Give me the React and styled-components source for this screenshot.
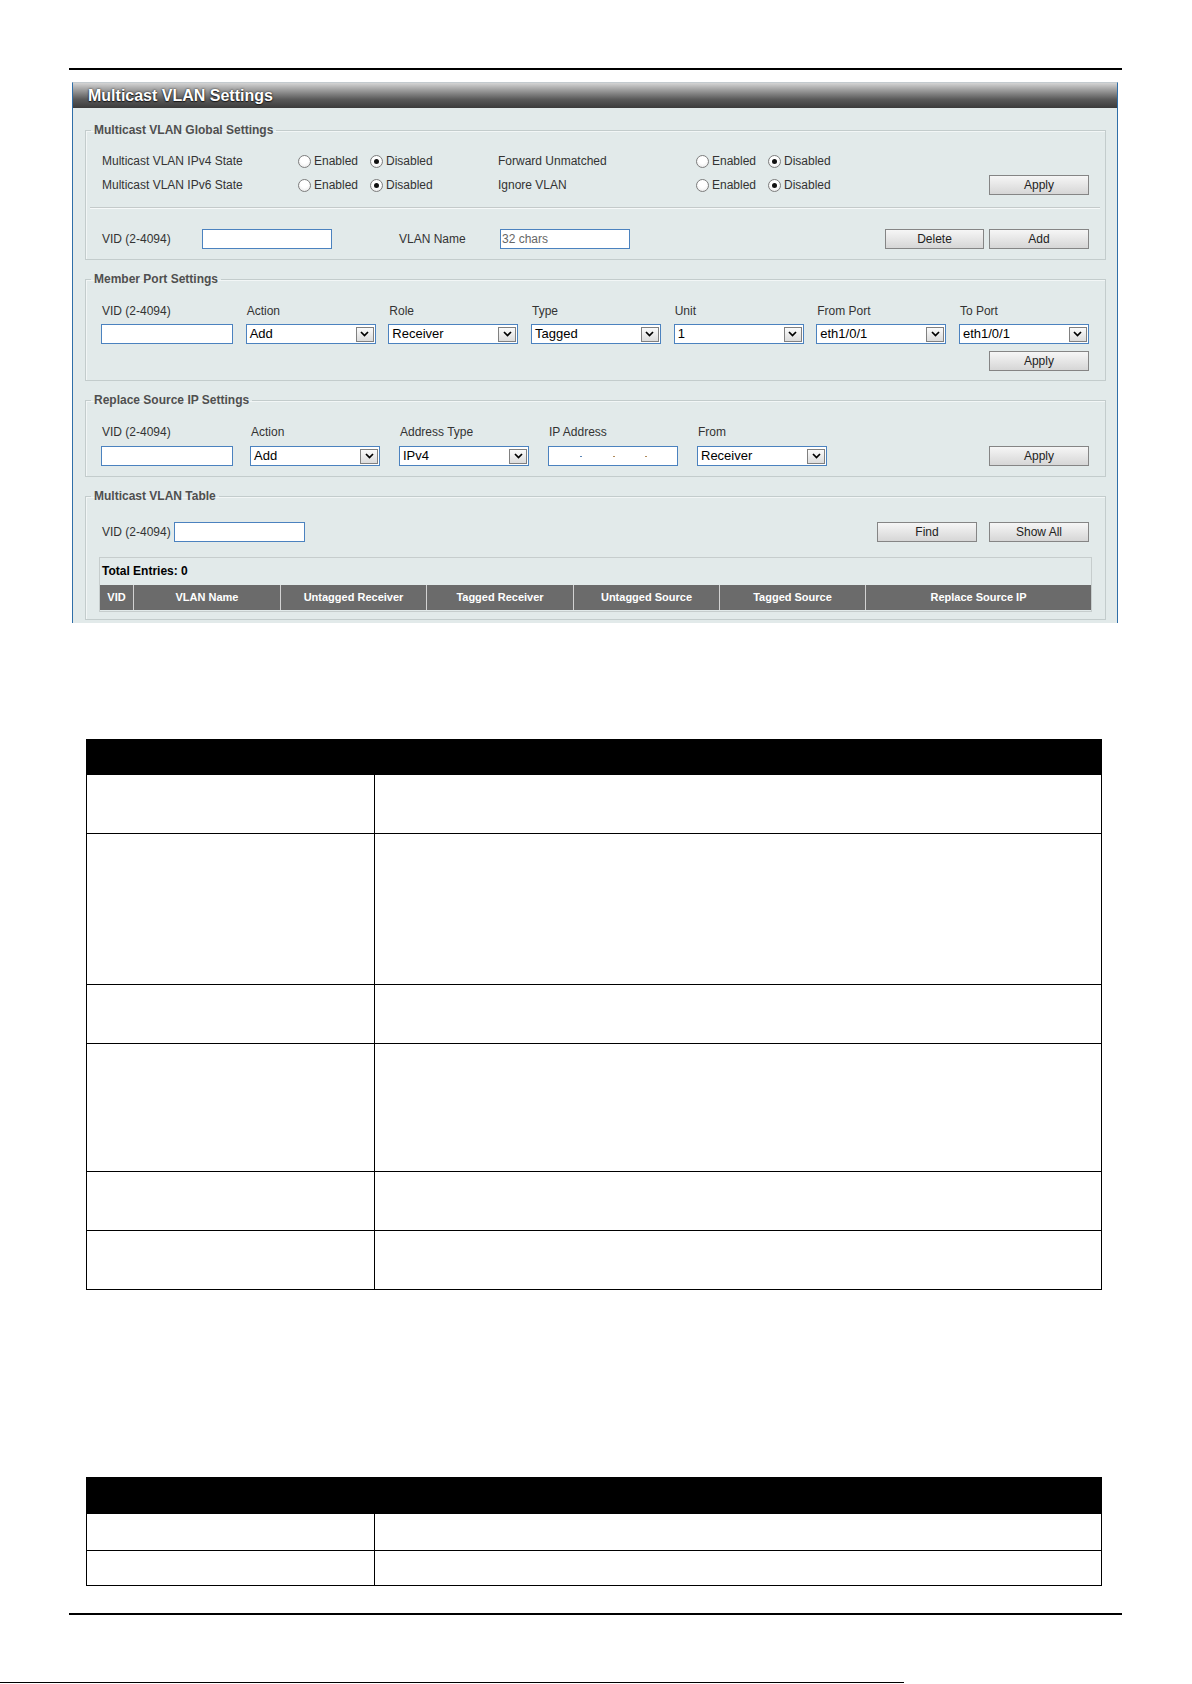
import React from "react";
import styled, { createGlobalStyle } from "styled-components";

const GlobalStyle = createGlobalStyle`
  html, body { margin: 0; padding: 0; background: #fff; }
  body { font-family: "Liberation Sans", Arial, sans-serif; color: #333; }
  * { box-sizing: border-box; }
`;

const FONT = `"Liberation Sans", Arial, sans-serif`;

const Page = styled.div`
  width: 1192px;
  height: 1684px;
  display: flex;
  flex-direction: column;
  overflow: hidden;
`;

const Rule = styled.div`
  flex-shrink: 0;
  height: ${(p) => p.$thick}px;
  width: ${(p) => p.$width}px;
  margin-left: ${(p) => p.$left}px;
  margin-top: ${(p) => p.$top}px;
  background: #000;
`;

/* ---------- web panel ---------- */

const Panel = styled.section`
  flex-shrink: 0;
  margin: 12px 0 0 72px;
  width: 1046px;
  border: 1px solid #2f6ea8;
  border-top-color: #c3cace;
  border-bottom: none;
  background: #e2eaea;
`;

const TitleBar = styled.div`
  height: 25px;
  padding-left: 15px;
  background: linear-gradient(#d4d4d4 0%, #9a9a9a 30%, #5a5a5a 65%, #3b3b3b 100%);
  color: #fff;
  font: bold 16px/25px ${FONT};
  text-shadow: 0 0 2px #1a1a1a, 0 1px 1px #1a1a1a;
`;

const PanelBody = styled.div`
  padding: 15px 11px 3px 12px;
  display: flex;
  flex-direction: column;
  gap: 12px;
`;

const Group = styled.fieldset`
  margin: 0;
  padding: 0;
  min-width: 0;
  border: 1px solid #c3cccc;
  box-shadow: inset 1px 1px 0 #f2f6f6;
`;

const Legend = styled.legend`
  margin-left: 5px;
  padding: 0 3px;
  font: bold 12px/14px ${FONT};
  color: #4f4f4f;
`;

const GroupBody = styled.div`
  padding: ${(p) => p.$pad};
`;

const Label = styled.span`
  font: 12px/14px ${FONT};
  color: #333;
  white-space: nowrap;
  padding-left: ${(p) => p.$indent || 0}px;
  width: ${(p) => (p.$w ? `${p.$w}px` : "auto")};
  flex-shrink: 0;
`;

const StateRows = styled.div`
  display: flex;
  flex-direction: column;
  gap: 2px;
  padding: 0 11px 0 12px;
`;

const StateRow = styled.div`
  display: grid;
  grid-template-columns: 196px 200px 198px 1fr auto;
  align-items: center;
  height: 22px;
`;

const RadioGroup = styled.div`
  display: flex;
  align-items: center;
`;

const Option = styled.label`
  display: inline-flex;
  align-items: center;
  gap: 3px;
  width: 72px;
  font: 12px/14px ${FONT};
  color: #333;
`;

const RadioDot = styled.span`
  width: 13px;
  height: 13px;
  border-radius: 50%;
  border: 1px solid #7d7d7d;
  background: radial-gradient(circle at 50% 35%, #ffffff 40%, #e4e4e4 100%);
  display: inline-flex;
  align-items: center;
  justify-content: center;
  &::after {
    content: "";
    width: 5px;
    height: 5px;
    border-radius: 50%;
    background: #111;
    display: ${(p) => (p.$on ? "block" : "none")};
  }
`;

const Divider = styled.div`
  margin-top: 11px;
  height: 2px;
  border-top: 1px solid #c4caca;
  border-bottom: 1px solid #f6f9f9;
`;

const FlexRow = styled.div`
  display: flex;
  align-items: center;
  height: 20px;
  margin-top: ${(p) => p.$top || 0}px;
  padding: 0 11px 0 12px;
`;

const Spacer = styled.div`
  flex: 1;
`;

const TextInput = styled.div`
  width: ${(p) => p.$w || 130}px;
  height: 20px;
  flex-shrink: 0;
  border: 1px solid #4b82bf;
  background: #fff;
  font: 12px/18px ${FONT};
  color: #666;
  padding-left: 1px;
  margin-left: ${(p) => p.$ml || 0}px;
`;

const IpInput = styled(TextInput)`
  display: flex;
  align-items: center;
  justify-content: space-evenly;
`;

const IpDot = styled.span`
  width: 2px;
  height: 1px;
  margin-top: 1px;
  background: ${(p) => p.$c};
`;

const SelectBox = styled.div`
  width: ${(p) => p.$w || 130}px;
  height: 20px;
  border: 1px solid #4b82bf;
  background: #fff;
  display: flex;
  align-items: center;
  justify-content: space-between;
  padding: 0 1px 0 3px;
  font: 13px/18px ${FONT};
  color: #000;
`;

const ArrowBox = styled.span`
  width: 18px;
  height: 15px;
  border: 1px solid #808080;
  background: linear-gradient(#fbfbfb, #dcdcdc);
  display: flex;
  align-items: center;
  justify-content: center;
`;

const Button = styled.button`
  width: ${(p) => p.$w || 100}px;
  height: 20px;
  margin: 0 0 0 ${(p) => p.$ml || 0}px;
  padding: 0;
  border: 1px solid #858585;
  border-radius: 0;
  background: linear-gradient(#f6f6f6, #d6d6d6);
  font: 12px/18px ${FONT};
  color: #222;
  justify-self: end;
`;

const MemberGrid = styled.div`
  display: grid;
  grid-template-columns: 132px repeat(6, 130px);
  column-gap: 12.67px;
  row-gap: 6px;
  padding: 0 11px 0 11px;
  align-items: end;
`;

const ReplaceGrid = styled.div`
  display: grid;
  grid-template-columns: 149px 149px 149px 149px 130px 1fr;
  row-gap: 7px;
  padding: 0 11px 0 11px;
  align-items: end;
`;

const GridLabel = styled(Label)`
  padding-left: 1px;
`;

const ApplyCell = styled.div`
  grid-column: ${(p) => p.$col};
  display: flex;
  justify-content: flex-end;
  margin-top: ${(p) => p.$mt || 0}px;
`;

const EntriesBox = styled.div`
  margin: 15px 8px 0 9px;
  border: 1px solid #c6cdcd;
  padding-bottom: 1px;
`;

const EntriesTitle = styled.div`
  height: 27px;
  padding-left: 2px;
  font: bold 12px/27px ${FONT};
  color: #000;
`;

const HeadRow = styled.div`
  display: grid;
  grid-template-columns: 33px 147px 146px 147px 146px 146px 1fr;
  height: 25px;
  background: #6b6b6b;
`;

const HeadCell = styled.div`
  font: bold 11px/25px ${FONT};
  color: #fff;
  text-align: center;
  border-left: ${(p) => (p.$first ? "none" : "1px solid #d2d2d2")};
  white-space: nowrap;
`;

/* ---------- document tables ---------- */

const DocTable = styled.div`
  flex-shrink: 0;
  margin: ${(p) => p.$top}px 0 0 86px;
  width: 1016px;
  border: 1px solid #000;
`;

const DocHead = styled.div`
  height: ${(p) => p.$h}px;
  background: #000;
`;

const DocRow = styled.div`
  display: grid;
  grid-template-columns: 287px 1fr;
  height: ${(p) => p.$h}px;
  border-top: 1px solid #000;
`;

const DocCell = styled.div`
  border-left: ${(p) => (p.$first ? "none" : "1px solid #000")};
`;

/* ---------- small pieces ---------- */

const Chevron = () => (
  <svg width="9" height="6" viewBox="0 0 9 6">
    <polyline points="1,1 4.5,4.6 8,1" fill="none" stroke="#000" strokeWidth="1.7" />
  </svg>
);

const Select = ({ value, w }) => (
  <SelectBox $w={w}>
    <span>{value}</span>
    <ArrowBox>
      <Chevron />
    </ArrowBox>
  </SelectBox>
);

const Radios = ({ on }) => (
  <RadioGroup>
    <Option>
      <RadioDot $on={on === "en"} />
      Enabled
    </Option>
    <Option>
      <RadioDot $on={on === "dis"} />
      Disabled
    </Option>
  </RadioGroup>
);

const memberFields = [
  ["VID (2-4094)", null],
  ["Action", "Add"],
  ["Role", "Receiver"],
  ["Type", "Tagged"],
  ["Unit", "1"],
  ["From Port", "eth1/0/1"],
  ["To Port", "eth1/0/1"],
];

const tableCols = [
  "VID",
  "VLAN Name",
  "Untagged Receiver",
  "Tagged Receiver",
  "Untagged Source",
  "Tagged Source",
  "Replace Source IP",
];

const App = () => (
  <Page>
    <GlobalStyle />
    <Rule $top={68} $left={69} $width={1053} $thick={2} />

    <Panel>
      <TitleBar>Multicast VLAN Settings</TitleBar>
      <PanelBody>
        <Group>
          <Legend>Multicast VLAN Global Settings</Legend>
          <GroupBody $pad="13px 5px 10px 4px">
            <StateRows>
              <StateRow>
                <Label>Multicast VLAN IPv4 State</Label>
                <Radios on="dis" />
                <Label>Forward Unmatched</Label>
                <Radios on="dis" />
                <span />
              </StateRow>
              <StateRow>
                <Label>Multicast VLAN IPv6 State</Label>
                <Radios on="dis" />
                <Label>Ignore VLAN</Label>
                <Radios on="dis" />
                <Button>Apply</Button>
              </StateRow>
            </StateRows>
            <Divider />
            <FlexRow $top={20}>
              <Label $w={100}>VID (2-4094)</Label>
              <TextInput />
              <Label $w={168} $indent={67}>VLAN Name</Label>
              <TextInput>32 chars</TextInput>
              <Spacer />
              <Button $w={99}>Delete</Button>
              <Button $ml={5}>Add</Button>
            </FlexRow>
          </GroupBody>
        </Group>

        <Group>
          <Legend>Member Port Settings</Legend>
          <GroupBody $pad="18px 5px 9px 4px">
            <MemberGrid>
              {memberFields.map(([label]) => (
                <GridLabel key={label}>{label}</GridLabel>
              ))}
              {memberFields.map(([label, value]) =>
                value === null ? (
                  <TextInput key={label} $w={132} />
                ) : (
                  <Select key={label} value={value} />
                )
              )}
              <ApplyCell $col={7} $mt={1}>
                <Button>Apply</Button>
              </ApplyCell>
            </MemberGrid>
          </GroupBody>
        </Group>

        <Group>
          <Legend>Replace Source IP Settings</Legend>
          <GroupBody $pad="18px 5px 10px 4px">
            <ReplaceGrid>
              <GridLabel>VID (2-4094)</GridLabel>
              <GridLabel>Action</GridLabel>
              <GridLabel>Address Type</GridLabel>
              <GridLabel>IP Address</GridLabel>
              <GridLabel>From</GridLabel>
              <span />
              <TextInput $w={132} />
              <Select value="Add" />
              <Select value="IPv4" />
              <IpInput>
                <IpDot $c="#5a86b8" />
                <IpDot $c="#b08a5a" />
                <IpDot $c="#b08a5a" />
              </IpInput>
              <Select value="Receiver" />
              <ApplyCell $col={6}>
                <Button>Apply</Button>
              </ApplyCell>
            </ReplaceGrid>
          </GroupBody>
        </Group>

        <Group>
          <Legend>Multicast VLAN Table</Legend>
          <GroupBody $pad="19px 5px 7px 4px">
            <FlexRow>
              <Label>VID (2-4094)</Label>
              <TextInput $w={131} $ml={3} />
              <Spacer />
              <Button>Find</Button>
              <Button $ml={12}>Show All</Button>
            </FlexRow>
            <EntriesBox>
              <EntriesTitle>Total Entries: 0</EntriesTitle>
              <HeadRow>
                {tableCols.map((c, i) => (
                  <HeadCell key={c} $first={i === 0}>
                    {c}
                  </HeadCell>
                ))}
              </HeadRow>
            </EntriesBox>
          </GroupBody>
        </Group>
      </PanelBody>
    </Panel>

    <DocTable $top={116}>
      <DocHead $h={34} />
      {[59, 151, 59, 128, 59, 59].map((h, i) => (
        <DocRow key={i} $h={h}>
          <DocCell $first />
          <DocCell />
        </DocRow>
      ))}
    </DocTable>

    <DocTable $top={187}>
      <DocHead $h={35} />
      {[37, 35].map((h, i) => (
        <DocRow key={i} $h={h}>
          <DocCell $first />
          <DocCell />
        </DocRow>
      ))}
    </DocTable>

    <Rule $top={27} $left={69} $width={1053} $thick={2} />
    <Rule $top={67} $left={0} $width={904} $thick={1} />
  </Page>
);

export default App;
